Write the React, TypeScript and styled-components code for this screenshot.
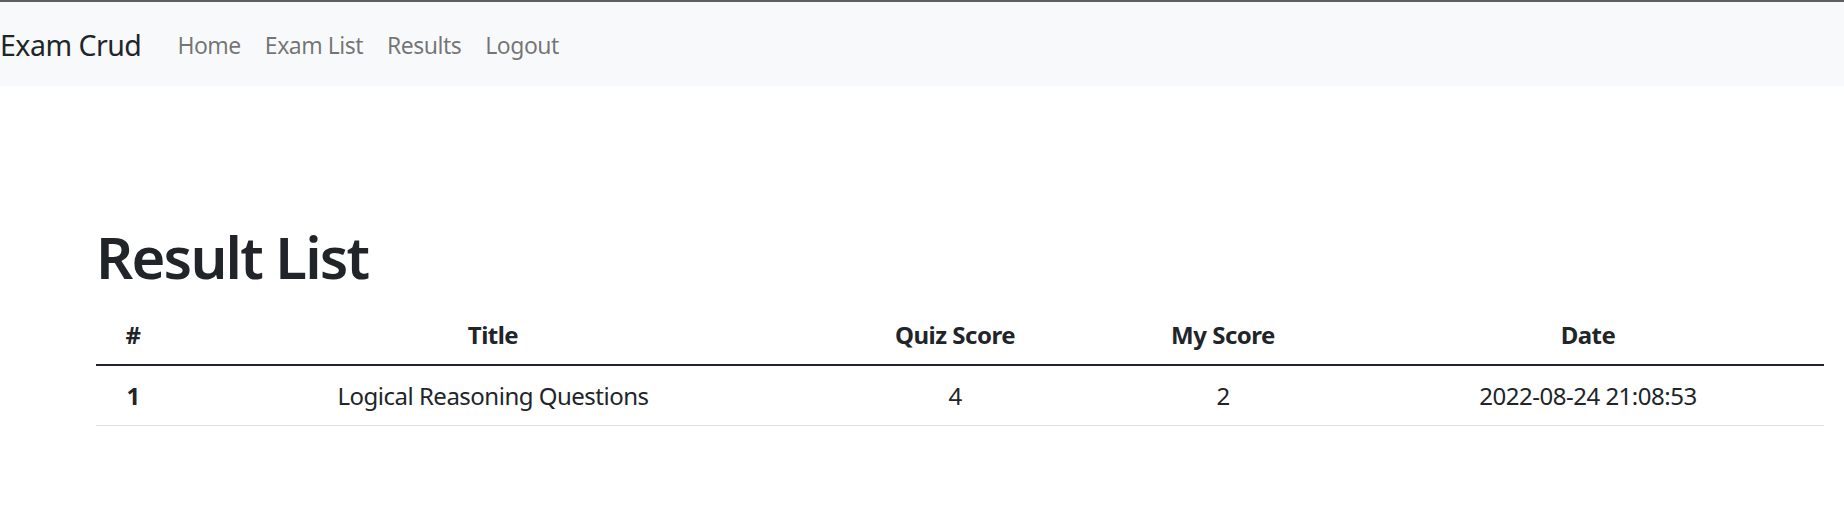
import React from "react";
import styled, { createGlobalStyle } from "styled-components";

interface result {
  id: number;
  title: string;
  quizScore: number;
  myScore: number;
  date: string;
}

const results: result[] = [
  {
    id: 1,
    title: "Logical Reasoning Questions",
    quizScore: 4,
    myScore: 2,
    date: "2022-08-24 21:08:53",
  },
];

const links = ["Home", "Exam List", "Results", "Logout"];

// column widths so the centred cells land where they should
const cols = [74, 646, 278, 258, 472];

const App: React.FC = () => {
  return (
    <>
      <GlobalStyle />
      <TopEdge />
      <Navbar>
        <Brand href="#">Exam Crud</Brand>
        <NavList>
          {links.map((l) => (
            <NavLink key={l} href="#">
              {l}
            </NavLink>
          ))}
        </NavList>
      </Navbar>

      <Container>
        <Heading>Result List</Heading>
        <Table>
          <colgroup>
            {cols.map((w, i) => (
              <col key={i} style={{ width: w }} />
            ))}
          </colgroup>
          <thead>
            <tr>
              <Th>#</Th>
              <Th>Title</Th>
              <Th>Quiz Score</Th>
              <Th>My Score</Th>
              <Th>Date</Th>
            </tr>
          </thead>
          <tbody>
            {results.map((r) => (
              <tr key={r.id}>
                <Td bold>{r.id}</Td>
                <Td>{r.title}</Td>
                <Td>{r.quizScore}</Td>
                <Td>{r.myScore}</Td>
                <Td>{r.date}</Td>
              </tr>
            ))}
          </tbody>
        </Table>
      </Container>
    </>
  );
};

export default App;

const GlobalStyle = createGlobalStyle`
  body {
    margin: 0;
    background: #ffffff;
    color: #212529;
    font-family: "Noto Sans", "Open Sans", sans-serif;
  }
  * {
    box-sizing: border-box;
  }
`;

const TopEdge = styled.div`
  height: 2px;
  background-color: #5f5f5f;
`;

const Navbar = styled.nav`
  height: 84px;
  background-color: #f8f9fa;
  display: flex;
  align-items: center;
  padding-top: 2px;
`;

const Brand = styled.a`
  font-size: 28.5px;
  color: #212529;
  text-decoration: none;
  margin-right: 24px;
  letter-spacing: -0.5px;
`;

const NavList = styled.div`
  display: flex;
  align-items: center;
`;

const NavLink = styled.a`
  padding: 0 12px;
  font-size: 23px;
  color: rgba(0, 0, 0, 0.55);
  text-decoration: none;
  letter-spacing: -0.5px;
`;

const Container = styled.div`
  margin-left: 96px;
  width: 1728px;
  padding-top: 135px;
`;

const Heading = styled.h1`
  margin: 0 0 12px;
  font-size: 58px;
  font-weight: 600;
  line-height: 72px;
  letter-spacing: -1.8px;
  color: #212529;
`;

const Table = styled.table`
  width: 100%;
  border-collapse: collapse;
  table-layout: fixed;
`;

const Th = styled.th`
  padding: 12px;
  height: 60px;
  font-size: 24px;
  font-weight: 700;
  text-align: center;
  border-bottom: 2px solid #212529;
  letter-spacing: -0.5px;
`;

const Td = styled.td<{ bold?: boolean }>`
  padding: 12px;
  height: 60px;
  font-size: 24px;
  font-weight: ${(p) => (p.bold ? 700 : 400)};
  text-align: center;
  border-bottom: 1px solid #dee2e6;
  letter-spacing: -0.5px;
`;
